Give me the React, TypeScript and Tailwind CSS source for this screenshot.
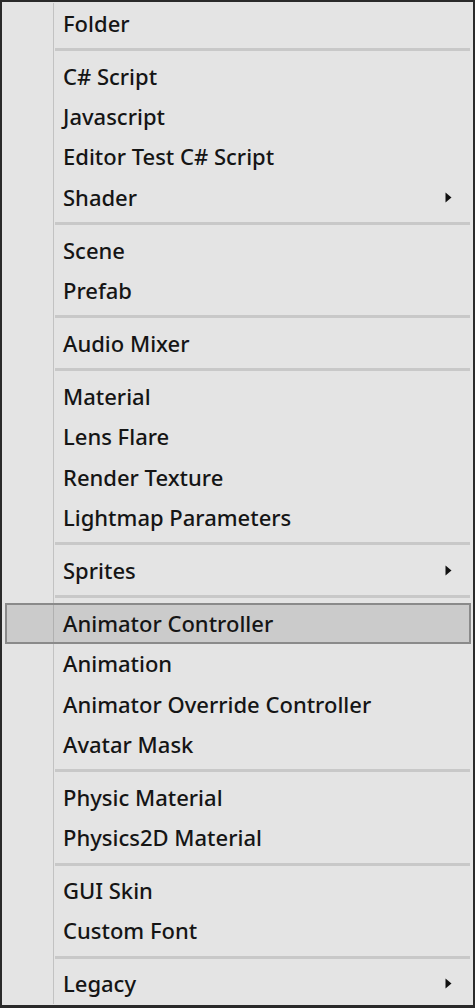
import React from "react";

type Item = { label: string; sub?: boolean; hl?: boolean };

const groups: Item[][] = [
  [{ label: "Folder" }],
  [
    { label: "C# Script" },
    { label: "Javascript" },
    { label: "Editor Test C# Script" },
    { label: "Shader", sub: true },
  ],
  [{ label: "Scene" }, { label: "Prefab" }],
  [{ label: "Audio Mixer" }],
  [
    { label: "Material" },
    { label: "Lens Flare" },
    { label: "Render Texture" },
    { label: "Lightmap Parameters" },
  ],
  [{ label: "Sprites", sub: true }],
  [
    { label: "Animator Controller", hl: true },
    { label: "Animation" },
    { label: "Animator Override Controller" },
    { label: "Avatar Mask" },
  ],
  [{ label: "Physic Material" }, { label: "Physics2D Material" }],
  [{ label: "GUI Skin" }, { label: "Custom Font" }],
  [{ label: "Legacy", sub: true }],
];

function Arrow() {
  return (
    <svg width="7" height="11" viewBox="0 0 7 11" className="shrink-0">
      <path d="M0.5 0.5 L6.5 5.5 L0.5 10.5 Z" fill="#111" />
    </svg>
  );
}

function Row({ item }: { item: Item }) {
  if (item.hl) {
    return (
      <div className="h-[40.33px] flex items-stretch">
        <div className="w-[3px]" />
        <div className="flex-1 flex items-stretch border-2 border-[#8a8a8a] bg-[#cbcbcb] mr-[2px]">
          <div className="w-[47px] border-r border-[#b0b0b0]" />
          <div className="flex-1 flex items-center pl-[9px] pr-[19px]">
            <span className="flex-1">{item.label}</span>
            {item.sub && <Arrow />}
          </div>
        </div>
      </div>
    );
  }
  return (
    <div className="h-[40.33px] flex items-stretch">
      <div className="w-[52px] border-r border-[#c2c2c2]" />
      <div className="flex-1 flex items-center pl-[9px] pr-[21px]">
        <span className="flex-1">{item.label}</span>
        {item.sub && <Arrow />}
      </div>
    </div>
  );
}

function Sep() {
  return (
    <div className="h-[12.67px] flex items-stretch">
      <div className="w-[52px] border-r border-[#c2c2c2]" />
      <div className="flex-1 flex items-center pl-[1px] pr-[3px]">
        <div className="h-[3px] w-full bg-[#c8c8c8]" />
      </div>
    </div>
  );
}

export default function App() {
  return (
    <div
      className="w-[475px] h-[1008px] bg-[#e4e4e4] border-t-2 border-l-2 border-r-2 border-b-[3px] border-[#2a2a2a] text-[#151515] text-[22px] flex flex-col pt-[1px] overflow-hidden"
      style={{ fontFamily: '"Noto Sans", "Open Sans", sans-serif', fontWeight: 500 }}
    >
      {groups.map((g, gi) => (
        <React.Fragment key={gi}>
          {gi > 0 && <Sep />}
          {g.map((it) => (
            <Row key={it.label} item={it} />
          ))}
        </React.Fragment>
      ))}
    </div>
  );
}
